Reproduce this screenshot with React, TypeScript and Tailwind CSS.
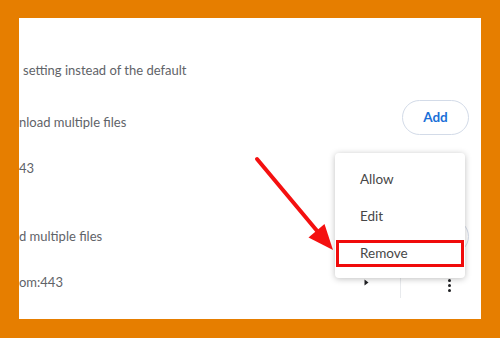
import React from 'react';

const font = { fontFamily: 'Lato, "Noto Sans", sans-serif' };

const AddButton: React.FC = () => (
  <button className="h-[35px] w-[67px] rounded-full border border-[#d3dbe8] bg-white text-[13.5px] font-bold text-[#1a6fd8]">
    Add
  </button>
);

const App: React.FC = () => {
  return (
    <div
      className="relative h-[338px] w-[500px] bg-[#e67e00] pl-[19px] pr-[19px] pt-[18px] pb-[19px]"
      style={font}
    >
      <div className="relative h-[301px] w-[462px] overflow-hidden bg-white text-[13px] text-[#5f6368]">
        <div className="flex flex-col">
          {/* custom behaviours intro */}
          <div className="mt-[42px] flex h-[20px] items-center pl-[4px] leading-[20px]">
            setting instead of the default
          </div>

          {/* allowed header */}
          <div className="mt-[20px] flex h-[35px] items-start justify-between pr-[12px]">
            <span className="pt-[12px] leading-[20px]">nload multiple files</span>
            <AddButton />
          </div>

          <div className="mt-[23px] flex h-[20px] items-center leading-[20px]">43</div>

          {/* blocked header */}
          <div className="mt-[41px] flex h-[35px] items-start justify-between pr-[12px]">
            <span className="pt-[7px] leading-[20px]">d multiple files</span>
            <AddButton />
          </div>

          {/* site row */}
          <div className="mt-[18px] flex h-[20px] items-center leading-[20px]">
            <span className="flex-1">om:443</span>
            <div className="flex h-[20px] items-center">
              <svg width="5" height="7" viewBox="0 0 5 7" className="mr-[31px]">
                <path d="M0.5 0.5 L4.5 3.5 L0.5 6.5 Z" fill="#202124" />
              </svg>
              <div className="h-[26px] w-px self-start bg-[#e8eaed]" />
              <div className="ml-[47px] mr-[30px] flex flex-col gap-[2px] pt-[6px]">
                <span className="block h-[3px] w-[3px] rounded-full bg-[#202124]" />
                <span className="block h-[3px] w-[3px] rounded-full bg-[#202124]" />
                <span className="block h-[3px] w-[3px] rounded-full bg-[#202124]" />
              </div>
            </div>
          </div>
        </div>

        {/* action menu */}
        <div className="absolute left-[316px] top-[135px] h-[125px] w-[130px] rounded-[4px] bg-white pt-[8px] pb-[6px] text-[13.5px] text-[#474747] shadow-[0_1px_6px_rgba(0,0,0,0.25)]">
          <div className="flex h-[37px] items-center pl-[25px]">Allow</div>
          <div className="flex h-[37px] items-center pl-[25px]">Edit</div>
          <div className="flex h-[37px] items-center pl-[25px]">Remove</div>
          <div className="absolute left-[1px] top-[87px] h-[27px] w-[128px] border-[3px] border-[#f00a0a]" />
        </div>
      </div>

      {/* annotation arrow */}
      <svg className="pointer-events-none absolute left-0 top-0" width="500" height="338">
        <line x1="257" y1="159" x2="318" y2="232" stroke="#f41010" strokeWidth="4" strokeLinecap="round" />
        <polygon points="333,250 308.5,237.5 324.5,224" fill="#f41010" />
      </svg>
    </div>
  );
};

export default App;
